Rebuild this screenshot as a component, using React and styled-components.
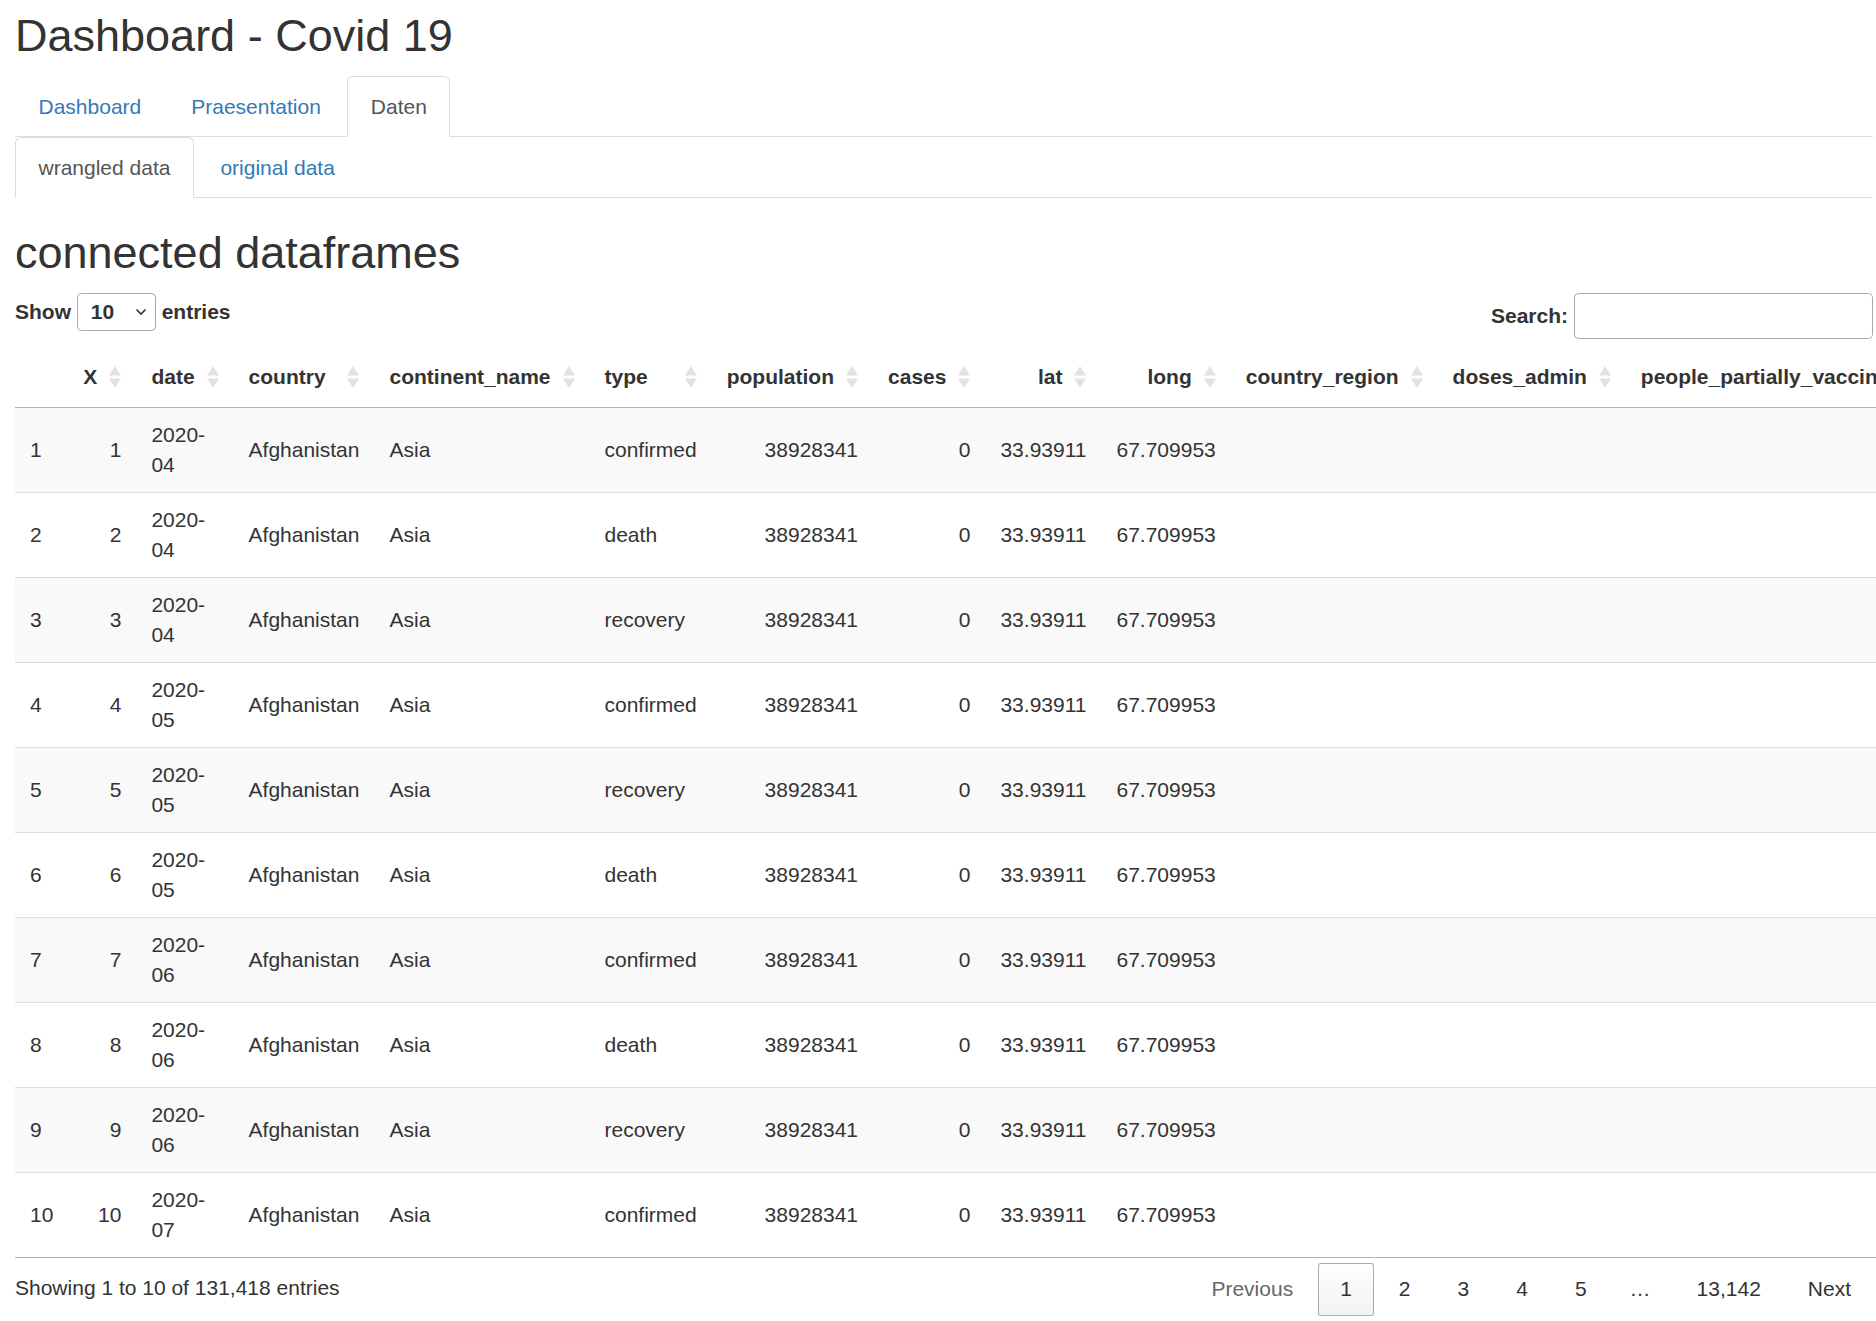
import React from 'react';
import styled, { createGlobalStyle } from 'styled-components';

const GlobalStyle = createGlobalStyle`
  *, *::before, *::after { box-sizing: border-box; }
  html, body { margin: 0; padding: 0; overflow: hidden; background: #fff; }
  body {
    font-family: "Liberation Sans", Arial, Helvetica, sans-serif;
    font-size: 21px;
    line-height: 30px;
    color: #333;
  }
`;

const Page = styled.div`
  padding: 0 3px 0 15px;
`;

const Heading = styled.h2`
  font-size: 45px;
  font-weight: 500;
  line-height: 1.1;
  margin: ${(p) => (p.$top ? `${p.$top}px 0 16px` : '11px 0 15px')};
  color: #333;
`;

const Tabs = styled.ul`
  display: flex;
  list-style: none;
  margin: 0;
  padding: 0;
  border-bottom: 1px solid #ddd;
`;

const TabItem = styled.li`
  margin-bottom: -1px;
`;

const TabLink = styled.a`
  display: block;
  padding: 15px 22.5px 14px;
  margin-right: 3px;
  line-height: 30px;
  border: 1px solid transparent;
  border-radius: 6px 6px 0 0;
  text-decoration: none;
  cursor: pointer;
  color: ${(p) => (p.$active ? '#555' : '#337ab7')};
  background: ${(p) => (p.$active ? '#fff' : 'transparent')};
  border-color: ${(p) => (p.$active ? '#ddd #ddd transparent' : 'transparent')};
`;

const Controls = styled.div`
  display: flex;
  justify-content: space-between;
  align-items: flex-start;
  padding-bottom: 7.5px;
`;

const ControlLabel = styled.label`
  display: inline-block;
  font-weight: 700;
  white-space: nowrap;
`;

const SelectWrap = styled.span`
  position: relative;
  display: inline-block;
`;

const LengthSelect = styled.select`
  appearance: none;
  -webkit-appearance: none;
  width: 79px;
  height: 38px;
  padding: 0 0 0 13px;
  border: 1px solid #aaa;
  border-radius: 4.5px;
  background: transparent;
  font: inherit;
  font-weight: 700;
  color: #333;
`;

const Chevron = styled.svg`
  position: absolute;
  right: 9px;
  top: 50%;
  transform: translateY(-50%);
  pointer-events: none;
`;

const SearchInput = styled.input`
  width: 299px;
  height: 46px;
  margin-left: 6px;
  padding: 0 7.5px;
  border: 1px solid #aaa;
  border-radius: 4.5px;
  background: transparent;
  font: inherit;
  color: inherit;
`;

const Table = styled.table`
  width: 100%;
  border-collapse: separate;
  border-spacing: 0;
  border-bottom: 1px solid rgba(0, 0, 0, 0.3);
`;

const Th = styled.th`
  position: relative;
  padding: ${(p) => (p.$sortable ? '15px 39px 15px 15px' : '15px')};
  text-align: ${(p) => p.$align};
  font-weight: 700;
  border-bottom: 1px solid rgba(0, 0, 0, 0.3);
  vertical-align: middle;
  white-space: normal;
`;

const SortIcon = styled.svg`
  position: absolute;
  right: 15px;
  top: 50%;
  transform: translateY(-50%);
`;

const Row = styled.tr`
  background: ${(p) => (p.$odd ? '#f9f9f9' : '#fff')};
`;

const Td = styled.td`
  padding: 12px 15px;
  text-align: ${(p) => p.$align};
  vertical-align: middle;
  border-top: ${(p) => (p.$first ? 'none' : '1px solid #ddd')};
`;

const Footer = styled.div`
  display: flex;
  justify-content: space-between;
  align-items: flex-start;
`;

const Info = styled.div`
  padding-top: 15.75px;
`;

const Paginate = styled.div`
  display: flex;
  align-items: center;
  padding-top: 5.25px;
`;

const PageButton = styled.a`
  display: inline-block;
  min-width: 31.5px;
  padding: 10.5px 21px;
  margin-left: 3px;
  text-align: center;
  border: 1px solid ${(p) => (p.$current ? 'rgba(0,0,0,0.3)' : 'transparent')};
  border-radius: 3px;
  color: ${(p) => (p.$disabled ? '#666' : '#333')};
  background: ${(p) =>
    p.$current
      ? 'linear-gradient(to bottom, rgba(230,230,230,0.05) 0%, rgba(0,0,0,0.05) 100%)'
      : 'transparent'};
  cursor: ${(p) => (p.$disabled ? 'default' : 'pointer')};
`;

const Ellipsis = styled.span`
  padding: 0 21px;
`;

const columns = [
  { key: 'idx', label: '', align: 'left', sortable: false },
  { key: 'X', label: 'X', align: 'right', sortable: true },
  { key: 'date', label: 'date', align: 'left', sortable: true },
  { key: 'country', label: 'country', align: 'left', sortable: true },
  { key: 'continent_name', label: 'continent_name', align: 'left', sortable: true },
  { key: 'type', label: 'type', align: 'left', sortable: true },
  { key: 'population', label: 'population', align: 'right', sortable: true },
  { key: 'cases', label: 'cases', align: 'right', sortable: true },
  { key: 'lat', label: 'lat', align: 'right', sortable: true },
  { key: 'long', label: 'long', align: 'right', sortable: true },
  { key: 'country_region', label: 'country_region', align: 'left', sortable: true },
  { key: 'doses_admin', label: 'doses_admin', align: 'left', sortable: true },
  { key: 'people_partially_vaccinated', label: 'people_partially_vaccinated', align: 'left', sortable: true },
  { key: 'people_fully_vaccinated', label: 'people_fully_vaccinated', align: 'left', sortable: true },
];

const rowSpec = [
  ['04', 'confirmed'],
  ['04', 'death'],
  ['04', 'recovery'],
  ['05', 'confirmed'],
  ['05', 'recovery'],
  ['05', 'death'],
  ['06', 'confirmed'],
  ['06', 'death'],
  ['06', 'recovery'],
  ['07', 'confirmed'],
];

const rows = rowSpec.map(([month, type], i) => ({
  idx: String(i + 1),
  X: String(i + 1),
  date: (
    <>
      2020-<wbr />
      {month}
    </>
  ),
  country: 'Afghanistan',
  continent_name: 'Asia',
  type,
  population: '38928341',
  cases: '0',
  lat: '33.93911',
  long: '67.709953',
  country_region: '',
  doses_admin: '',
  people_partially_vaccinated: '',
  people_fully_vaccinated: '',
}));

function SortArrows() {
  return (
    <SortIcon width="12" height="24" viewBox="0 0 12 24" aria-hidden="true">
      <polygon points="6,1 12,10.5 0,10.5" fill="#333" fillOpacity="0.14" />
      <polygon points="0,13.5 12,13.5 6,23" fill="#333" fillOpacity="0.14" />
    </SortIcon>
  );
}

export default function App() {
  const mainTabs = ['Dashboard', 'Praesentation', 'Daten'];
  const subTabs = ['wrangled data', 'original data'];
  return (
    <Page>
      <GlobalStyle />
      <Heading>Dashboard - Covid 19</Heading>
      <Tabs>
        {mainTabs.map((t) => (
          <TabItem key={t}>
            <TabLink $active={t === 'Daten'}>{t}</TabLink>
          </TabItem>
        ))}
      </Tabs>
      <Tabs>
        {subTabs.map((t) => (
          <TabItem key={t}>
            <TabLink $active={t === 'wrangled data'}>{t}</TabLink>
          </TabItem>
        ))}
      </Tabs>
      <Heading $top={30}>connected dataframes</Heading>
      <Controls>
        <ControlLabel>
          Show{' '}
          <SelectWrap>
            <LengthSelect defaultValue="10">
              <option value="10">10</option>
              <option value="25">25</option>
              <option value="50">50</option>
              <option value="100">100</option>
            </LengthSelect>
            <Chevron width="12" height="8" viewBox="0 0 12 8" aria-hidden="true">
              <polyline points="1.5,1.5 6,6 10.5,1.5" fill="none" stroke="#333" strokeWidth="1.6" />
            </Chevron>
          </SelectWrap>{' '}
          entries
        </ControlLabel>
        <ControlLabel>
          Search:
          <SearchInput type="search" />
        </ControlLabel>
      </Controls>
      <Table>
        <thead>
          <tr>
            {columns.map((c) => (
              <Th key={c.key} $align={c.align} $sortable={c.sortable}>
                {c.label}
                {c.sortable && <SortArrows />}
              </Th>
            ))}
          </tr>
        </thead>
        <tbody>
          {rows.map((r, i) => (
            <Row key={i} $odd={i % 2 === 0}>
              {columns.map((c) => (
                <Td key={c.key} $align={c.align} $first={i === 0}>
                  {r[c.key]}
                </Td>
              ))}
            </Row>
          ))}
        </tbody>
      </Table>
      <Footer>
        <Info>Showing 1 to 10 of 131,418 entries</Info>
        <Paginate>
          <PageButton $disabled>Previous</PageButton>
          <PageButton $current>1</PageButton>
          <PageButton>2</PageButton>
          <PageButton>3</PageButton>
          <PageButton>4</PageButton>
          <PageButton>5</PageButton>
          <Ellipsis>…</Ellipsis>
          <PageButton>13,142</PageButton>
          <PageButton>Next</PageButton>
        </Paginate>
      </Footer>
    </Page>
  );
}
